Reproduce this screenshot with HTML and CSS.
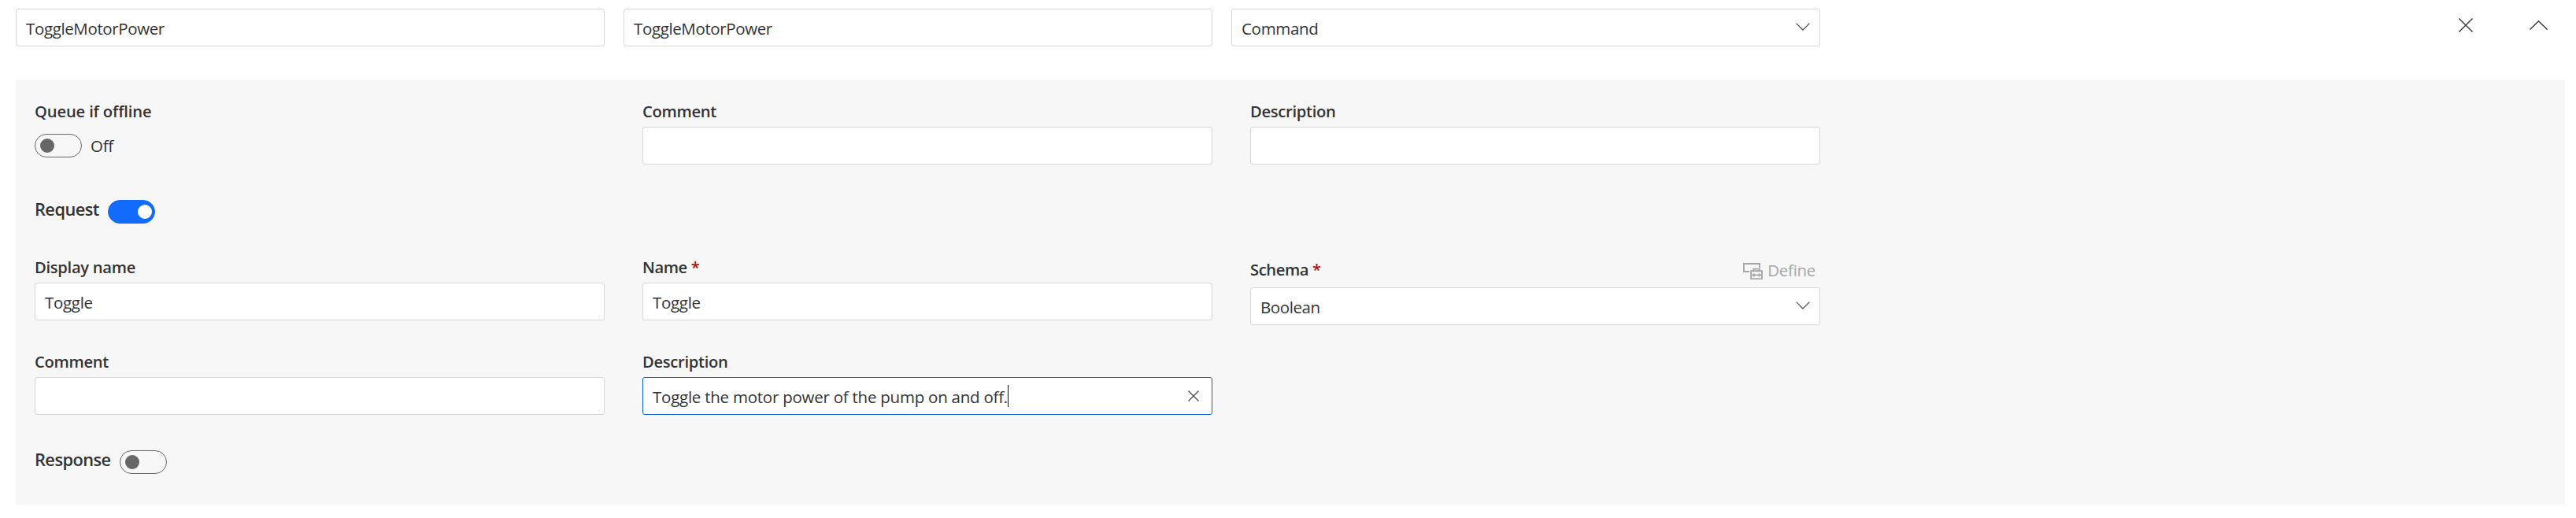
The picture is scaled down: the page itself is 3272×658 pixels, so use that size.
FILE: index.html
```html
<!DOCTYPE html>
<html lang="en">
<head>
<meta charset="utf-8">
<title>ToggleMotorPower</title>
<link rel="stylesheet" href="styles.css">
</head>
<body>
<main class="capability">
  <header class="head">
    <div class="box"><span class="val mixed">ToggleMotorPower</span></div>
    <div class="box"><span class="val mixed">ToggleMotorPower</span></div>
    <div class="box select"><span class="val">Command</span>
      <svg class="chev" viewBox="0 0 18 10"><path d="M.6.6 9 9 17.4.6"/></svg>
    </div>
    <div class="actions">
      <svg class="remove" viewBox="0 0 18 18"><path d="M.5.5l17 17M17.5.5l-17 17"/></svg>
      <svg class="collapse" viewBox="0 0 23 12"><path d="M.5 11.5l11-10.7 11 10.7"/></svg>
    </div>
  </header>

  <section class="panel">
    <div class="row">
      <div class="field">
        <div class="label queue">Queue if offline</div>
        <div class="switchrow"><span class="switch"><i class="knob"></i></span><span class="state">Off</span></div>
      </div>
      <div class="field"><div class="label">Comment</div><div class="box"></div></div>
      <div class="field"><div class="label">Description</div><div class="box"></div></div>
    </div>

    <div class="group request"><span class="title">Request</span><span class="switch on"><i class="knob"></i></span></div>

    <div class="row schema-row">
      <div class="field"><div class="label">Display name</div><div class="box"><span class="val">Toggle</span></div></div>
      <div class="field"><div class="label name">Name <b class="req">*</b></div><div class="box"><span class="val">Toggle</span></div></div>
      <div class="field schema">
        <div class="label-bar">
          <div class="label name">Schema <b class="req">*</b></div>
          <div class="define">
            <svg class="define-icon" viewBox="0 0 25 21"><path d="M8 11H1V1h20v5M10.2 10.2H24v10H10.2zM13.2 10V7.6h7.6V10M10 15.4h14M14 13.4v4M20.5 13.4v4"/></svg>
            <span>Define</span>
          </div>
        </div>
        <div class="box select"><span class="val boolean">Boolean</span>
          <svg class="chev" viewBox="0 0 18 10"><path d="M.6.6 9 9 17.4.6"/></svg>
        </div>
      </div>
    </div>

    <div class="row">
      <div class="field"><div class="label">Comment</div><div class="box"></div></div>
      <div class="field">
        <div class="label">Description</div>
        <div class="box focused">
          <span class="val sentence">Toggle the motor power of the pump on and off.</span><i class="caret"></i>
          <svg class="clear" viewBox="0 0 14 14"><path d="M.5.5l13 13M13.5.5l-13 13"/></svg>
        </div>
      </div>
    </div>

    <div class="group response"><span class="title">Response</span><span class="switch"><i class="knob"></i></span></div>
  </section>
</main>
</body>
</html>
```

FILE: styles.css
```css
* { box-sizing: border-box; }
body {
  margin: 0;
  background: #fff;
  color: #333;
  font: 20.5px/30px "Open Sans", "Noto Sans", sans-serif;
  letter-spacing: -0.3px;
}
svg { display: block; fill: none; flex: none; }
.capability { padding: 11px 14px 17px 20px; height: 658px; }

.head {
  display: grid;
  grid-template-columns: repeat(3, 748px) 1fr;
  column-gap: 24px;
  height: 90px;
  align-items: start;
}
.actions {
  display: flex;
  justify-content: flex-end;
  align-items: center;
  gap: 72px;
  height: 42px;
  padding-right: 22px;
}
.actions svg { stroke: #333; stroke-width: 1.4; }
.remove { width: 18px; height: 18px; }
.collapse { width: 23px; height: 12px; }

.box {
  display: flex;
  align-items: center;
  height: 48px;
  padding: 0 12px;
  background: #fff;
  border: 1px solid #d7d7d7;
  border-radius: 3px;
  white-space: pre;
}
.val { padding-top: 2px; }
.mixed { letter-spacing: -0.37px; }
.boolean { letter-spacing: -0.42px; }
.sentence { letter-spacing: -0.24px; }
.select { justify-content: space-between; }
.chev { width: 18px; height: 10px; stroke: #555; stroke-width: 1.3; margin-bottom: 2px; }
.focused { border-color: #0a64d0; }
.caret { width: 1px; height: 28px; background: #111; }
.clear { width: 14px; height: 14px; margin-left: auto; margin-right: 4px; stroke: #444; stroke-width: 1.2; }

.panel {
  height: 540px;
  padding: 25px 24px 0;
  background: #f7f7f7;
}
.row { display: grid; grid-template-columns: repeat(3, 724px); column-gap: 48px; align-items: start; }
.label {
  height: 30px;
  margin-bottom: 5px;
  font-size: 20.2px;
  font-weight: 600;
  letter-spacing: -0.3px;
  white-space: pre;
}
.queue { letter-spacing: -0.15px; }
.name { letter-spacing: -0.4px; }
.req { color: #b01010; font-weight: 600; }

.switchrow { display: flex; align-items: flex-start; gap: 11px; padding-top: 9px; }
.switch {
  display: flex;
  align-items: center;
  width: 60px;
  height: 30px;
  padding: 0 6px;
  border: 1px solid #666;
  border-radius: 15px;
}
.knob { width: 18px; height: 18px; border-radius: 50%; background: #666; }
.switch.on { justify-content: flex-end; padding-right: 3px; background: #136bfb; border-color: #136bfb; }
.on .knob { background: #fff; }

.group { display: flex; align-items: flex-start; gap: 11px; height: 30px; }
.title { font-size: 21.8px; font-weight: 600; letter-spacing: -0.55px; margin-top: -3px; }
.request { margin-top: 45px; }
.schema-row { margin-top: 40px; height: 120px; }
.response { margin-top: 45px; }

.schema { padding-top: 3px; }
.label-bar { display: flex; justify-content: space-between; height: 38px; }
.define { display: flex; align-items: flex-start; gap: 6px; color: #a6a6a6; font-size: 20.5px; padding: 1px 6px 0 0; }
.define-icon { width: 25px; height: 21px; margin-top: 6px; stroke: #a6a6a6; stroke-width: 1.9; }
```
